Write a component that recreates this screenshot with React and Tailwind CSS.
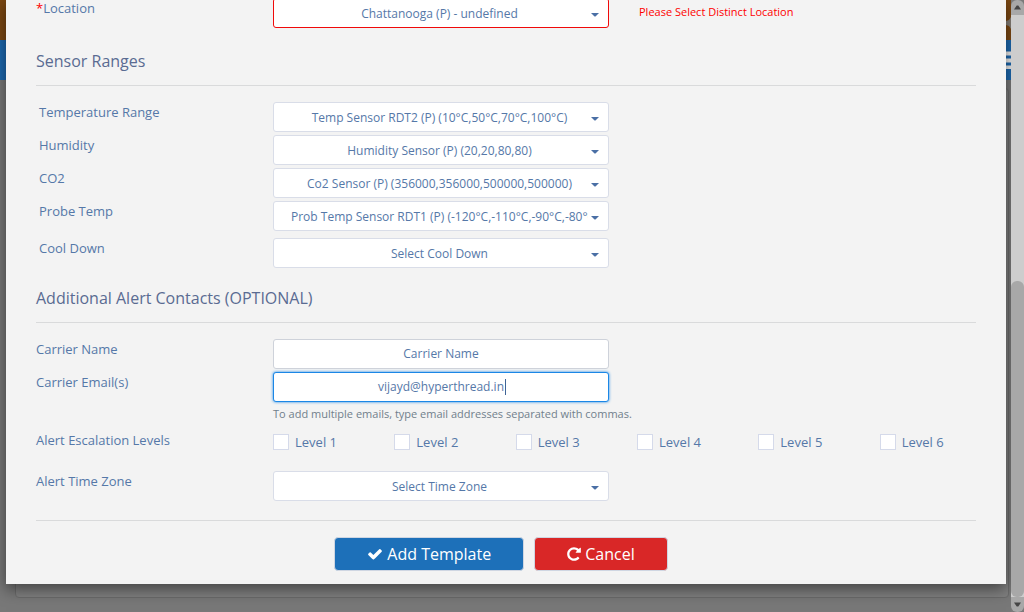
import React from "react";

const ROW = "grid grid-cols-[237fr_336fr_367fr] items-start";
const FIELD =
  "h-[30px] w-full min-w-0 rounded-[3px] border bg-white text-center text-[12px] text-[#5578a8] outline-none";

function Arrow() {
  return (
    <svg
      className="pointer-events-none col-start-1 row-start-1 mt-1 mr-2.5 h-1 w-2 justify-self-end fill-[#4a6fa5]"
      viewBox="0 0 8 4"
      aria-hidden="true"
    >
      <path d="M0.5 0h7v0.6L4.500 3.500h-1L0.5 0.6z" />
    </svg>
  );
}

function SelectField({ id, value, error }) {
  return (
    <div className="grid items-center">
      <select
        id={id}
        className={`${FIELD} col-start-1 row-start-1 appearance-none pt-0.5 pr-5 pl-[17px] ${
          error ? "border-[#f00a0a]" : "border-[#d9dde8]"
        }`}
      >
        <option>{value}</option>
      </select>
      <Arrow />
    </div>
  );
}

function Label({ htmlFor, indent, children }) {
  return (
    <label htmlFor={htmlFor} className={`text-[13px] leading-5 ${indent ? "pl-[3px]" : ""}`}>
      {children}
    </label>
  );
}

function SectionTitle({ children }) {
  return (
    <h2 className="mb-4 border-b border-[#d9dadb] pb-3 text-[16px] leading-6 text-[#5a6b92]">
      {children}
    </h2>
  );
}

function ScrollArrow({ down }) {
  return (
    <div
      className={`flex h-[15px] shrink-0 items-center justify-center bg-[#a8a8a8] ${
        down ? "rounded-b-md" : "rounded-t-md"
      }`}
    >
      <svg className="h-[5px] w-[7px] fill-[#454545]" viewBox="0 0 7 5" aria-hidden="true">
        <path d={down ? "M0 0.5h7L4.3 4.6h-1.6z" : "M0 4.5h7L4.3 0.4h-1.6z"} />
      </svg>
    </div>
  );
}

function Scrollbar() {
  return (
    <div className="flex w-[13px] shrink-0 flex-col bg-[#7a7a7a]" aria-hidden="true">
      <ScrollArrow />
      <div className="grid flex-1 grid-rows-[266fr_316fr] bg-[#cdcdcd]">
        <div className="row-start-2 rounded-md bg-[#a8a8a8]" />
      </div>
      <ScrollArrow down />
    </div>
  );
}

function PageBehind() {
  return (
    <div className="absolute inset-0 flex flex-col bg-[#787878]" aria-hidden="true">
      <div className="flex h-10 shrink-0 items-center justify-end bg-[#7c4812]">
        <svg className="mt-1.5 h-3 w-[5px] fill-[#878078]" viewBox="0 0 5 12">
          <path d="M5 0v12L3 9 0 8V4l3-1z" />
        </svg>
      </div>
      <div className="flex h-10 shrink-0 items-center justify-end bg-[#1c69b0]">
        <svg className="h-[18px] w-[5px] fill-[#eeeeee]" viewBox="0 0 5 18">
          <path d="M0 0.5h5v4H0zM0 7.500h5v4H0zM0 14.500h5v4H0z" />
        </svg>
      </div>
      <div className="mt-2 mr-0.5 mb-3.5 ml-[15px] flex-1 rounded-sm border border-[#6b6b6b] bg-[#808080]" />
    </div>
  );
}

const ranges = [
  ["temperature", "Temperature Range", "Temp Sensor RDT2 (P) (10°C,50°C,70°C,100°C)"],
  ["humidity", "Humidity", "Humidity Sensor (P) (20,20,80,80)"],
  ["co2", "CO2", "Co2 Sensor (P) (356000,356000,500000,500000)"],
  ["probe", "Probe Temp", "Prob Temp Sensor RDT1 (P) (-120°C,-110°C,-90°C,-80°C)"],
];

const BUTTON =
  "mr-2.5 flex h-[34px] items-center gap-1 rounded-[4px] border border-[#cfd6e2] px-8 text-[16px] text-white";

export default function App() {
  return (
    <div className="flex h-screen overflow-hidden font-['Open_Sans',sans-serif] text-[#5578a8]">
      <div className="relative min-w-0 flex-1 overflow-hidden">
        <PageBehind />
        <form
          className="relative mr-[5px] ml-1.5 bg-[#f3f3f3] px-[30px] pb-[13px] shadow-[0_5px_15px_rgba(0,0,0,0.5)]"
          onSubmit={(e) => e.preventDefault()}
        >
          <div className={`${ROW} -mt-0.5`}>
            <Label htmlFor="location">
              <span className="text-[#ff0000]">*</span>Location
            </Label>
            <SelectField id="location" value="Chattanooga (P) - undefined" error />
            <p className="pl-[30px] text-[11px] leading-7 text-[#ff0000]">
              Please Select Distinct Location
            </p>
          </div>

          <section className="mt-[21px]">
            <SectionTitle>Sensor Ranges</SectionTitle>
            <div className="flex flex-col gap-[3px]">
              {ranges.map(([id, label, value]) => (
                <div key={id} className={ROW}>
                  <Label htmlFor={id} indent>
                    {label}
                  </Label>
                  <SelectField id={id} value={value} />
                </div>
              ))}
            </div>
            <div className={`${ROW} mt-[7px]`}>
              <Label htmlFor="cooldown" indent>
                Cool Down
              </Label>
              <SelectField id="cooldown" value="Select Cool Down" />
            </div>
          </section>

          <section className="mt-[18px]">
            <SectionTitle>Additional Alert Contacts (OPTIONAL)</SectionTitle>
            <div className={ROW}>
              <Label htmlFor="carrier">Carrier Name</Label>
              <input
                id="carrier"
                type="text"
                placeholder="Carrier Name"
                className={`${FIELD} border-[#ced2da] pb-0.5 placeholder:text-[#5578a8]`}
              />
            </div>
            <div className={`${ROW} mt-[3px]`}>
              <Label htmlFor="emails">Carrier Email(s)</Label>
              <div className="grid items-center">
                <input
                  id="emails"
                  type="text"
                  defaultValue="vijayd@hyperthread.in"
                  className={`${FIELD} col-start-1 row-start-1 border-[#1b87e6] pb-0.5 shadow-[0_0_3px_#1b87e6]`}
                />
                <span
                  className="pointer-events-none col-start-1 row-start-1 ml-32 h-4 w-px justify-self-center bg-[#3f6496]"
                  aria-hidden="true"
                />
              </div>
              <p className="col-span-2 col-start-2 mt-0.5 text-[11px] leading-5 text-[#717f8c]">
                To add multiple emails, type email addresses separated with commas.
              </p>
            </div>
            <div className="mt-1.5 grid grid-cols-[237fr_703fr] items-start">
              <span id="levels" className="text-[13px] leading-5">
                Alert Escalation Levels
              </span>
              <div role="group" aria-labelledby="levels" className="-mr-[25px] grid h-6 grid-cols-6 items-center">
                {[1, 2, 3, 4, 5, 6].map((n) => (
                  <label key={n} className="flex items-center gap-1.5 text-[13px] leading-5">
                    <input
                      type="checkbox"
                      className="size-4 shrink-0 appearance-none border border-[#d5daea] bg-white checked:bg-[#1c6fb8]"
                    />
                    Level {n}
                  </label>
                ))}
              </div>
            </div>
            <div className={`${ROW} mt-[17px]`}>
              <Label htmlFor="timezone">Alert Time Zone</Label>
              <SelectField id="timezone" value="Select Time Zone" />
            </div>
          </section>

          <div className="mt-[19px] flex justify-center border-t border-[#d9dadb] pt-4">
            <button type="submit" className={`${BUTTON} bg-[#1d70b9]`}>
              <svg className="size-4 fill-current" viewBox="0 0 1792 1792" aria-hidden="true">
                <path d="M1671 566q0 40-28 68l-724 724-136 136q-28 28-68 28t-68-28l-136-136-362-362q-28-28-28-68t28-68l136-136q28-28 68-28t68 28l294 295 656-657q28-28 68-28t68 28l136 136q28 28 28 68z" />
              </svg>
              Add Template
            </button>
            <button type="button" className={`${BUTTON} bg-[#d92727]`}>
              <svg className="h-4 w-3.5 fill-current" viewBox="0 0 1536 1792" aria-hidden="true">
                <path d="M1536 256v448q0 26-19 45t-45 19h-448q-42 0-59-40-17-39 14-69l138-138q-148-137-349-137-104 0-198.500 40.500t-163.500 109.500-109.500 163.500-40.500 198.500 40.500 198.500 109.500 163.500 163.500 109.500 198.500 40.500q119 0 225-52t179-147q7-10 23-12 15 0 25 9l137 138q9 8 9.500 20.500t-7.500 22.500q-109 132-264 204.500t-327 72.500q-156 0-298-61t-245-164-164-245-61-298 61-298 164-245 245-164 298-61q147 0 284.500 55.500t244.500 156.500l130-129q29-31 70-14 39 17 39 59z" />
              </svg>
              Cancel
            </button>
          </div>
        </form>
      </div>
      <Scrollbar />
    </div>
  );
}
